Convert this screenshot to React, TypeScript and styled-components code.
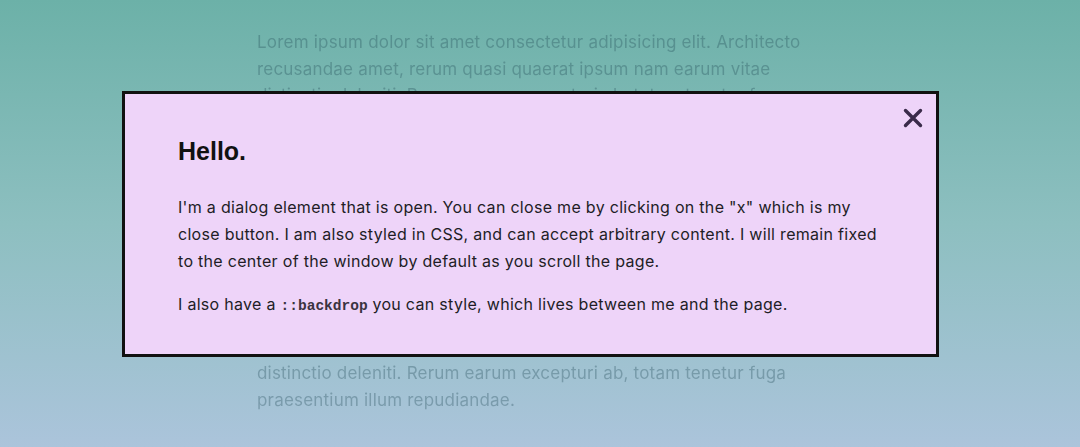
import React from "react";
import styled, { createGlobalStyle } from "styled-components";

const GlobalStyle = createGlobalStyle`
	html, body {
		margin: 0;
		height: 447px;
		overflow: hidden;
	}
	body {
		background: linear-gradient(180deg, #6cb1a8 0%, #8dbfc0 50%, #abc4db 100%);
		font-family: Inter, "Noto Sans", sans-serif;
	}
`;

const Page = styled.main`
	width: 566px;
	margin: 0 auto;
	padding-top: 29px;
	filter: blur(0.3px);
`;

const Filler = styled.p`
	margin: 0 0 33px;
	font-size: 17px;
	line-height: 26.5px;
	color: rgba(30, 70, 85, 0.32);
	letter-spacing: 0.2px;
`;

const Dialog = styled.dialog`
	position: fixed;
	left: 122px;
	top: 91px;
	margin: 0;
	width: 817px;
	box-sizing: border-box;
	padding: 43px 53px 20px;
	background: #eed4f9;
	border: 3px solid #111;
	color: #221d26;
	font-family: Inter, "Noto Sans", sans-serif;
`;

const CloseButton = styled.button`
	position: absolute;
	top: 14px;
	right: 13px;
	width: 20px;
	height: 20px;
	padding: 0;
	border: none;
	background: none;
	cursor: pointer;
	display: flex;
	align-items: center;
	justify-content: center;
`;

const Title = styled.h2`
	margin: 0 0 28px;
	font-family: "Liberation Sans", Arial, sans-serif;
	font-size: 25px;
	line-height: 29px;
	font-weight: 700;
	color: #111;
`;

const Text = styled.p`
	margin: 0 0 16px;
	font-size: 16px;
	line-height: 27px;
	letter-spacing: 0.3px;
`;

const Code = styled.code`
	font-family: "Liberation Mono", "Courier New", monospace;
	font-size: 14.5px;
	line-height: 1;
	font-weight: 700;
	letter-spacing: 0;
	color: #3a3340;
`;

const lorem =
	"Lorem ipsum dolor sit amet consectetur adipisicing elit. Architecto recusandae amet, rerum quasi quaerat ipsum nam earum vitae distinctio deleniti. Rerum earum excepturi ab, totam tenetur fuga praesentium illum repudiandae.";

function App() {
	return (
		<>
			<GlobalStyle />
			<Page>
				{[0, 1, 2].map((i) => (
					<Filler key={i}>{lorem}</Filler>
				))}
			</Page>
			<Dialog open>
				<CloseButton aria-label="close">
					<svg width="20" height="20" viewBox="0 0 20 20">
						<path
							d="M2.5 2.5 L17.5 17.5 M17.5 2.5 L2.5 17.5"
							stroke="#3a2b4a"
							strokeWidth="3.4"
							strokeLinecap="round"
						/>
					</svg>
				</CloseButton>
				<Title>Hello.</Title>
				<Text>
					I'm a dialog element that is open. You can close me by clicking on the "x"
					which is my close button. I am also styled in CSS, and can accept arbitrary
					content. I will remain fixed to the center of the window by default as you
					scroll the page.
				</Text>
				<Text>
					I also have a <Code>::backdrop</Code> you can style, which lives between me
					and the page.
				</Text>
			</Dialog>
		</>
	);
}

export default App;
